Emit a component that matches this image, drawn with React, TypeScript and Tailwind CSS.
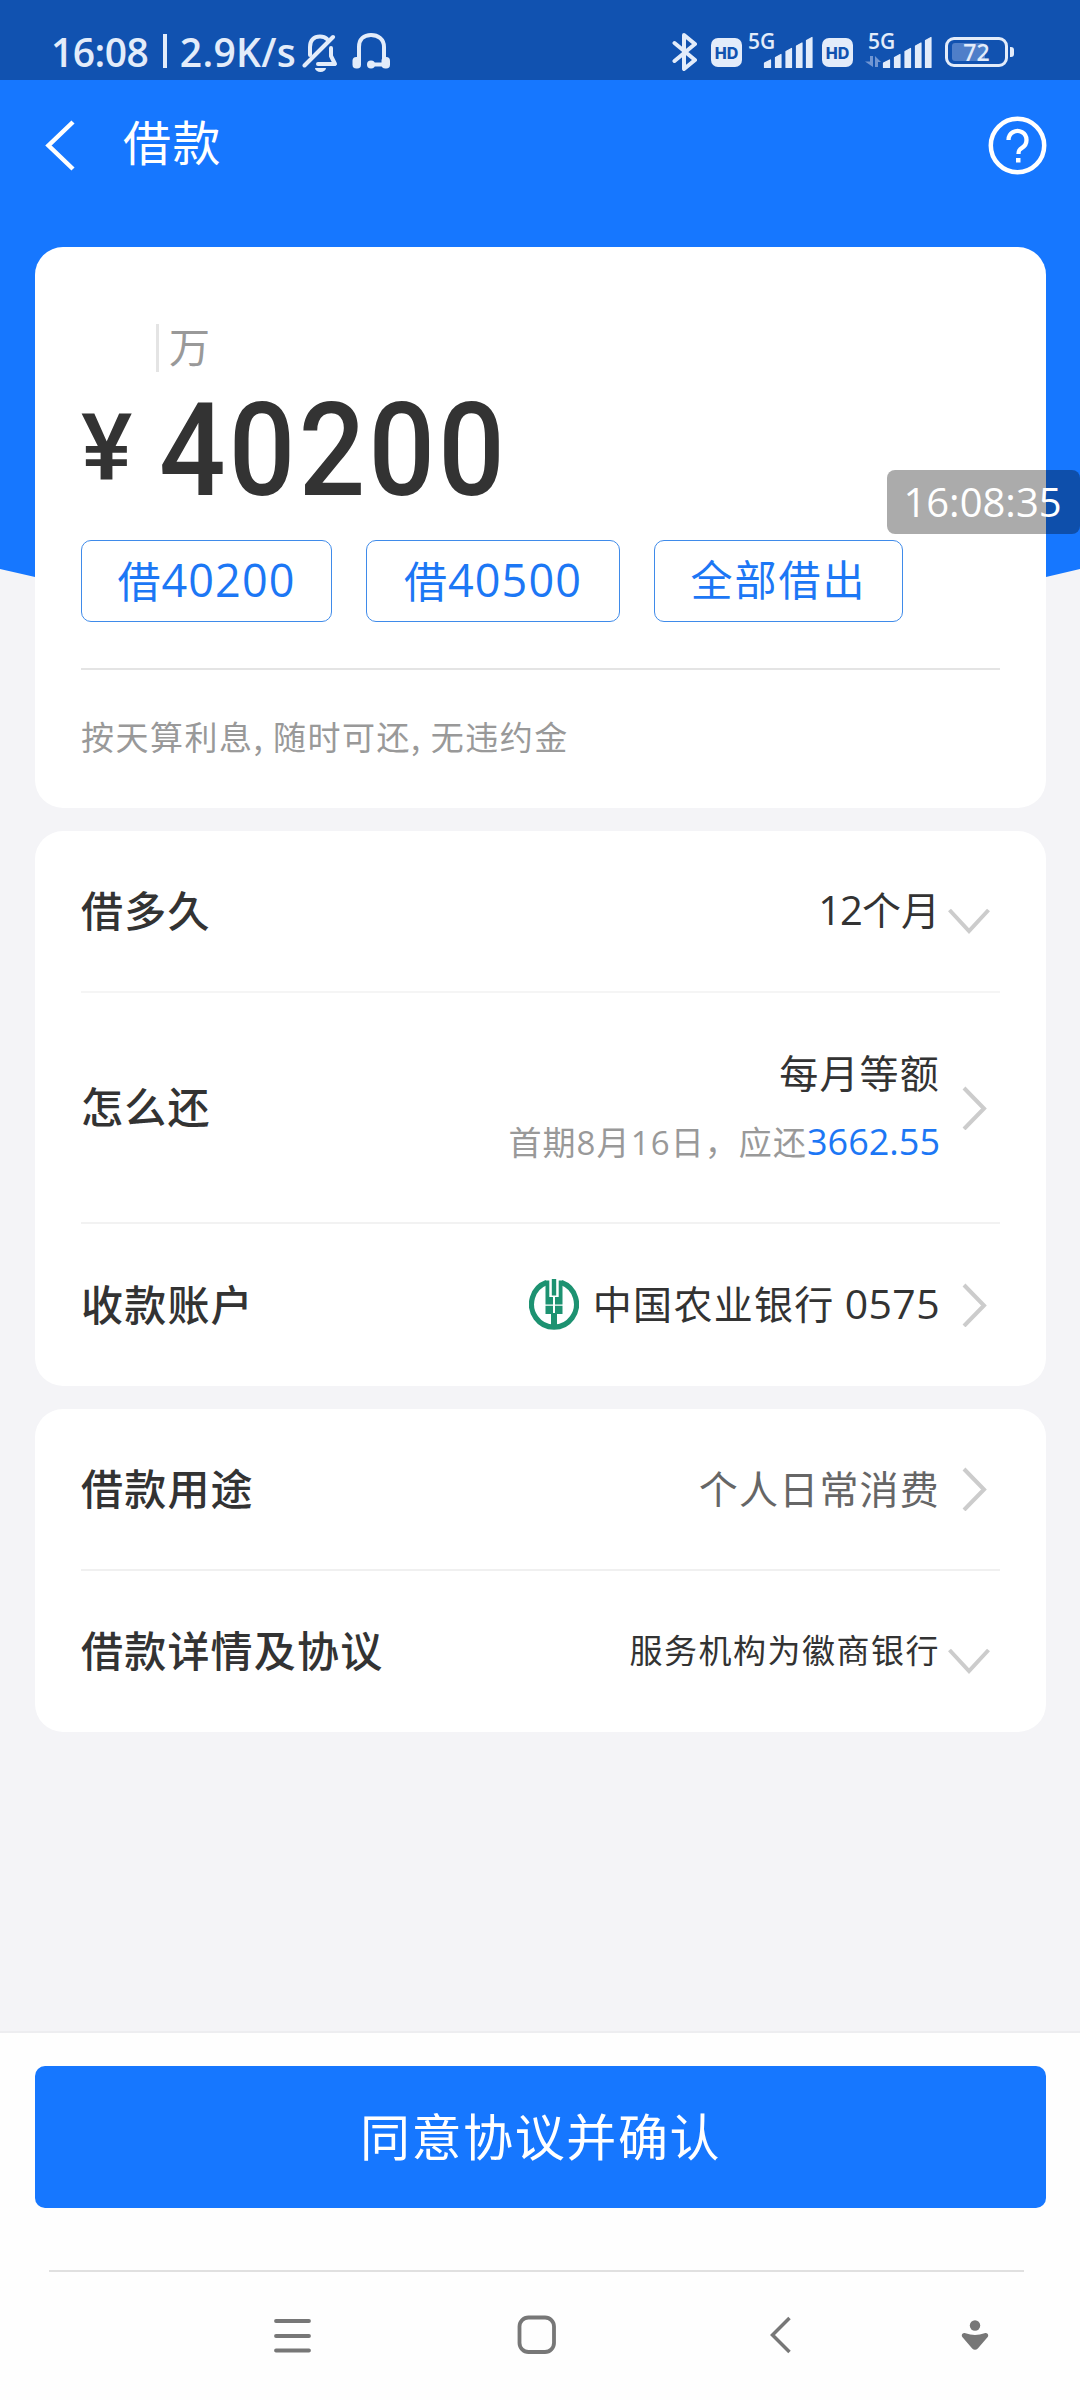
import React from "react";

const CJK = "font-['Noto_Sans_CJK_SC',sans-serif]";

function Num({ children, className = "" }: { children: React.ReactNode; className?: string }) {
  return <span className={`font-['Open_Sans',sans-serif] ${className}`}>{children}</span>;
}

function BellOff() {
  return (
    <svg width="37" height="40" viewBox="0 0 37 40" fill="none" stroke="#e3ecfa" strokeWidth="4" strokeLinecap="round" strokeLinejoin="round">
      <path d="M8 22V14C8 7 12 3.500 18 3.500c3 0 5.500 1 7 2.500" />
      <path d="M29 15v8l4 8H16" />
      <path d="M2.500 32.500L31 4" />
      <path d="M13 35h11a5.500 4 0 0 1-11 0z" fill="#e3ecfa" stroke="none" />
    </svg>
  );
}

function Headphones() {
  return (
    <svg width="38" height="38" viewBox="0 0 38 38" fill="none" stroke="#e3ecfa" strokeWidth="4">
      <path d="M7 30V15C7 7 12 3 19 3S32 7 32 15v15M19 32.500h14" />
      <rect x="0.500" y="25" width="8.500" height="11.500" rx="3.800" fill="#e3ecfa" stroke="none" />
      <rect x="29.500" y="25" width="8.500" height="11.500" rx="3.800" fill="#e3ecfa" stroke="none" />
      <circle cx="19" cy="32.500" r="4" fill="#e3ecfa" stroke="none" />
    </svg>
  );
}

function Bluetooth() {
  return (
    <svg width="26" height="40" viewBox="0 0 26 40" fill="none" stroke="#e3ecfa" strokeWidth="4" strokeLinecap="round" strokeLinejoin="round">
      <path d="M2.500 11L23 28 12 37V3L23 12 2.500 29" />
    </svg>
  );
}

function HD() {
  return (
    <div className="flex h-[29px] w-[31px] items-center justify-center rounded-[7px] bg-[#e3ecfa] font-['Inter',sans-serif] text-[16px] leading-none font-extrabold text-[#1152b0]">
      HD
    </div>
  );
}

function Signal({ data = false }: { data?: boolean }) {
  return (
    <div className="relative h-[38px] w-[66px]">
      <span className={`absolute top-[-2px] font-['Open_Sans',sans-serif] text-[21px] leading-[22px] font-semibold ${data ? "left-[1px]" : "left-0"}`}>5G</span>
      <svg className="absolute top-0 left-0 overflow-visible" width="66" height="38" viewBox="0 0 66 38" fill="#e3ecfa">
        <path
          d="M16.500 31l6-3v7.500h-6zM27.500 25.500l5.500-3v13h-5.500zM38 19.500l5.500-3v19H38zM48.500 14l5.500-3v24.500h-5.500zM58.500 8.500l5.500-3v30h-5.500z"
          stroke="#e3ecfa"
          strokeWidth="1.200"
          strokeLinejoin="round"
        />
        {data && <path d="M-2 29.500h5V24h3v11zM8 35V24l6 6h-3v5z" fill="#7196d3" />}
      </svg>
    </div>
  );
}

function Battery() {
  return (
    <div className="flex items-center gap-[2px]">
      <div className="relative flex h-[30px] w-[63px] items-center justify-center rounded-[9px] border-3 border-[#e3ecfa]">
        <div className="absolute top-[3px] left-[4px] h-[18px] w-[33px] rounded-[3px] bg-[#4f7fc9]" />
        <span className="relative font-['Open_Sans',sans-serif] text-[23px] leading-none font-semibold">72</span>
      </div>
      <div className="h-[10px] w-[4px] rounded-r-[3px] bg-[#e3ecfa]" />
    </div>
  );
}

function StatusBar() {
  return (
    <div className="flex h-[80px] items-start bg-[#1152b0] text-[#e3ecfa]">
      <div className="mt-[31px] ml-[51px] flex h-[40px] w-[245px] items-center font-['Open_Sans',sans-serif] text-[39px] leading-none font-semibold tracking-[-0.500px] whitespace-nowrap">
        <span className="w-[98px]">16:08</span>
        <span className="mr-[13px] ml-[14px] h-[34px] w-[4px] bg-[#e3ecfa]" />
        <span className="tracking-[0.300px]">2.9K/s</span>
      </div>
      <div className="mt-[33px] ml-[6px]"><BellOff /></div>
      <div className="mt-[32px] ml-[13px]"><Headphones /></div>
      <div className="mt-[32px] ml-[282px]"><Bluetooth /></div>
      <div className="mt-[38px] ml-[13px]"><HD /></div>
      <div className="mt-[32px] ml-[6px]"><Signal /></div>
      <div className="mt-[38px] ml-[8px]"><HD /></div>
      <div className="mt-[32px] ml-[14px]"><Signal data /></div>
      <div className="mt-[37px] ml-[12px]"><Battery /></div>
    </div>
  );
}

function ChevronRight() {
  return (
    <svg width="26" height="44" viewBox="0 0 26 44" fill="none" stroke="#ccc" strokeWidth="4">
      <path d="M2 2L22 22.500 2 43" />
    </svg>
  );
}

function ChevronDown() {
  return (
    <svg width="42" height="26" viewBox="0 0 42 26" fill="none" stroke="#ccc" strokeWidth="4">
      <path d="M1.500 2L21 23 40.500 2" />
    </svg>
  );
}

function BankLogo() {
  return (
    <svg width="50" height="52" viewBox="0 0 50 52" fill="#1d9271">
      <path d="M17.500 3.500A22.500 23 0 1 0 32.500 3.500" fill="none" stroke="#1d9271" strokeWidth="5.200" />
      <path d="M16.500 1.500h3.800V18h3.700v7.500h-7.500zM33.500 1.500h-3.800V18H26v7.500h7.500zM22.800 0h4.400v16.500h-4.400zM16.500 26.800H24V35h-7.500zM26 26.800h7.500V35H26zM22 34h6v16h-6z" />
    </svg>
  );
}

function Chip({ children, className }: { children: React.ReactNode; className: string }) {
  return (
    <div className={`flex h-[82px] items-center justify-center rounded-[10px] border border-[#3f8bea] leading-none whitespace-nowrap text-[#1c77f5] ${className}`}>
      {children}
    </div>
  );
}

function Row({ label, className, down, children }: { label: string; className: string; down?: boolean; children: React.ReactNode }) {
  return (
    <div className={`mx-[46px] flex items-center justify-between ${className}`}>
      <span className="mb-[5px] text-[42px] leading-none font-medium tracking-[1.200px] text-[#333]">{label}</span>
      <div className="flex items-center">
        {children}
        {down ? <div className="mt-[20px] mr-[10px] ml-[8px]"><ChevronDown /></div> : <div className="mr-[12px] ml-[23px]"><ChevronRight /></div>}
      </div>
    </div>
  );
}

export default function App() {
  return (
    <div className={`relative flex h-[2400px] w-[1080px] flex-col overflow-hidden bg-[#f4f4f7] ${CJK}`}>
      <StatusBar />
      <div className="relative h-[1951px]">
        {/* Curved header backdrop */}
        <svg className="absolute top-0 left-0" width="1080" height="560" viewBox="0 0 1080 560">
          <path d="M0 0H1080V489Q540 620 0 489z" fill="#1677ff" />
        </svg>
        <div className="relative">
          <div className="flex h-[167px] items-start text-white">
            <svg className="mt-[40px] ml-[44px]" width="31" height="52" viewBox="0 0 31 52" fill="none" stroke="#fff" strokeWidth="4.500">
              <path d="M29 2L4.500 25.500 29 49" />
            </svg>
            <span className="mt-[36px] ml-[48px] text-[48px] leading-none tracking-[1.500px]">借款</span>
            <svg className="mt-[36px] mr-[33px] ml-auto" width="59" height="59" viewBox="0 0 59 59" fill="none" stroke="#fff">
              <circle cx="29.500" cy="29.500" r="26.700" strokeWidth="4.500" />
              <path d="M20.500 24a9 9 0 1 1 13.500 7.800c-2.700 1.600-3.500 2.500-3.500 6.200" strokeWidth="4.300" />
              <path d="M28 42h4.500v4.500H28z" fill="#fff" stroke="none" />
            </svg>
          </div>

          <div className="mr-[34px] ml-[35px] flex h-[561px] flex-col rounded-[28px] bg-white px-[46px]">
            <div className="mt-[77px] ml-[75px] flex h-[48px] items-center gap-[10px]">
              <div className="h-[48px] w-[3px] bg-[#e4e4e4]" />
              <span className="mb-[6px] text-[41px] leading-none text-[#999]">万</span>
            </div>
            <div className="flex h-[168px] items-start font-['Roboto',sans-serif] leading-none font-medium text-[#333]">
              <span className="mt-[30px] block w-[78px] origin-left scale-x-[1.040] text-[93px]">¥</span>
              <span className="mt-[14px] block origin-left scale-x-[0.900] text-[130px] tracking-[3.700px]">40200</span>
            </div>
            <div className="flex">
              <Chip className="w-[251px] pb-[3px] text-[43px]">借<Num className="ml-[1px] text-[45px] tracking-[1.100px]">40200</Num></Chip>
              <Chip className="ml-[34px] w-[254px] pb-[3px] text-[43px]">借<Num className="ml-[1px] text-[45px] tracking-[1.100px]">40500</Num></Chip>
              <Chip className="ml-[34px] w-[249px] pb-[6px] text-[42px] tracking-[2px]">全部借出</Chip>
            </div>
            <div className="mt-[46px] h-[2px] bg-[#e4e4e4]" />
            <div className="mt-[50px] text-[33px] leading-none tracking-[1.500px] text-[#999]">按天算利息, 随时可还, 无违约金</div>
          </div>

          <div className="mt-[23px] mr-[34px] ml-[35px] h-[555px] rounded-[28px] bg-white">
            <Row label="借多久" className="h-[160px]" down>
              <span className="mb-[3px] text-[39px] leading-none text-[#333]"><Num className="text-[40px] tracking-[-1px]">12</Num>个月</span>
            </Row>
            <div className="mx-[46px] h-[2px] bg-[#f5f5f5]" />
            <Row label="怎么还" className="h-[229px]">
              <div className="mb-[4px] flex flex-col items-end">
                <span className="mr-[-1px] text-[39px] leading-none tracking-[1.200px] text-[#333]">每月等额</span>
                <span className="mt-[33px] mr-[-1px] text-[33px] leading-none tracking-[1.100px] text-[#999]">
                  首期<Num>8</Num>月<Num>16</Num>日，应还<Num className="text-[36px] tracking-normal text-[#1c77f5]">3662.55</Num>
                </span>
              </div>
            </Row>
            <div className="mx-[46px] h-[2px] bg-[#f2f2f2]" />
            <Row label="收款账户" className="h-[162px]">
              <BankLogo />
              <span className="mr-[-1px] mb-[4px] ml-[14px] text-[39px] leading-none tracking-[1.300px] text-[#333]">中国农业银行 <Num className="text-[41px] tracking-[0.400px]">0575</Num></span>
            </Row>
          </div>

          <div className="mt-[23px] mr-[34px] ml-[35px] h-[323px] rounded-[28px] bg-white">
            <Row label="借款用途" className="h-[160px]">
              <span className="mr-[-1px] mb-[4px] text-[39px] leading-none tracking-[1.200px] text-[#666]">个人日常消费</span>
            </Row>
            <div className="mx-[46px] h-[2px] bg-[#f0f0f0]" />
            <Row label="借款详情及协议" className="h-[160px]" down>
              <span className="mb-[3px] text-[33px] leading-none tracking-[1.500px] text-[#333]">服务机构为徽商银行</span>
            </Row>
          </div>
        </div>
        <div className="absolute top-[390px] right-0 flex h-[64px] w-[193px] items-center justify-center rounded-[8px] bg-black/33 pr-[2px] font-['Open_Sans',sans-serif] text-[40px] leading-none text-white">
          16:08:35
        </div>
      </div>

      <div className="h-[239px] border-t-2 border-[#ededf0] bg-[#fefefe] pt-[33px]">
        <div className="mr-[34px] ml-[35px] flex h-[142px] items-center justify-center rounded-[10px] bg-[#1677ff] pb-[7px] text-[50px] leading-none tracking-[1.600px] text-white">
          同意协议并确认
        </div>
      </div>
      <div className="h-[130px] bg-[#fefefe]">
        <div className="mr-[56px] ml-[49px] h-[2px] bg-[#e0e0e0]" />
        <div className="flex pt-[43px]">
          <svg className="mt-[2px] ml-[273px]" width="39" height="38" viewBox="0 0 39 38" stroke="#777" strokeWidth="3.800" strokeLinecap="round">
            <path d="M3 4h33M3 19h33M3 33.500h33" />
          </svg>
          <svg className="ml-[205px]" width="40" height="40" viewBox="0 0 40 40" fill="none" stroke="#777" strokeWidth="3.800">
            <rect x="2.500" y="2.500" width="34.500" height="34.500" rx="9" />
          </svg>
          <svg className="mt-[1px] ml-[211px]" width="24" height="38" viewBox="0 0 24 38" fill="none" stroke="#777" strokeWidth="3.500">
            <path d="M21.500 2L4.500 19 21.500 36" />
          </svg>
          <svg className="mt-[5px] ml-[169px]" width="28" height="32" viewBox="0 0 28 32" fill="#777">
            <circle cx="14" cy="5.500" r="5.200" />
            <path d="M4.500 13.200q9.500 3.600 19 0c3-.8 4.600 1.600 3.200 3.900L16.800 28.500q-2.800 2.600-5.600 0L1.300 17.100c-1.400-2.300.2-4.700 3.200-3.900z" />
          </svg>
        </div>
      </div>
    </div>
  );
}
